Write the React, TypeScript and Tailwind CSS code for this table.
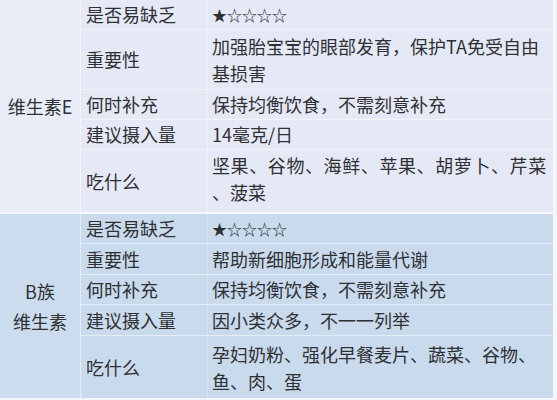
import React from "react";

const font = { fontFamily: '"Noto Sans CJK SC", "Noto Sans", sans-serif' };

type Row = { label: string; h: string; content: React.ReactNode };

function Section({
  title,
  rows,
  bg,
  first,
  line,
}: {
  title: React.ReactNode;
  rows: Row[];
  bg: string;
  first: string;
  line: string;
}) {
  return (
    <div className={`flex ${bg}`}>
      <div className={`w-[81px] shrink-0 flex items-center justify-center text-center border-r ${line} ${first}`}>
        {title}
      </div>
      <div className="flex-1 flex flex-col">
        {rows.map((r, i) => (
          <div
            key={i}
            className={`flex ${r.h} ${i < rows.length - 1 ? "border-b " + line : ""}`}
          >
            <div className={`w-[127px] shrink-0 flex items-center pl-[5px] border-r border-dotted ${line}`}>
              {r.label}
            </div>
            <div className="flex-1 min-w-0 flex items-center pl-[4px] leading-[27px] whitespace-nowrap">
              {r.content}
            </div>
          </div>
        ))}
      </div>
    </div>
  );
}

export default function App() {
  const stars = <span className="text-[15px] tracking-[0px]">★☆☆☆☆</span>;
  return (
    <div
      className="w-[557px] h-[400px] overflow-hidden bg-[#f4f6fb] pr-[4px] text-[18px] text-[#2f3034]"
      style={font}
    >
      <div className="border-b-2 border-[#f4f7fc]">
        <Section
          bg="bg-[#e5e9f5]"
          first="bg-[#e8ecf6]"
          line="border-[#f3f5fb]"
          title={<span>维生素E</span>}
          rows={[
            { label: "是否易缺乏", h: "h-[30px]", content: stars },
            {
              label: "重要性",
              h: "h-[60px]",
              content: (
                <div>
                  <div>加强胎宝宝的眼部发育，保护TA免受自由</div>
                  <div>基损害</div>
                </div>
              ),
            },
            { label: "何时补充", h: "h-[30px]", content: "保持均衡饮食，不需刻意补充" },
            { label: "建议摄入量", h: "h-[30px]", content: "14毫克/日" },
            {
              label: "吃什么",
              h: "h-[62px]",
              content: (
                <div className="-mt-[4px]">
                  <div className="tracking-[0.6px]">坚果、谷物、海鲜、苹果、胡萝卜、芹菜</div>
                  <div>、菠菜</div>
                </div>
              ),
            },
          ]}
        />
      </div>
      <Section
        bg="bg-[#c8daec]"
        first="bg-[#cadcee]"
        line="border-[#e4edf7]"
        title={
          <div className="leading-[30px]">
            <div>B族</div>
            <div>维生素</div>
          </div>
        }
        rows={[
          { label: "是否易缺乏", h: "h-[30px]", content: stars },
          { label: "重要性", h: "h-[31px]", content: "帮助新细胞形成和能量代谢" },
          { label: "何时补充", h: "h-[30px]", content: "保持均衡饮食，不需刻意补充" },
          { label: "建议摄入量", h: "h-[31px]", content: "因小类众多，不一一列举" },
          {
            label: "吃什么",
            h: "h-[62px]",
            content: (
              <div className="mt-[2px]">
                <div>孕妇奶粉、强化早餐麦片、蔬菜、谷物、</div>
                <div>鱼、肉、蛋</div>
              </div>
            ),
          },
        ]}
      />
    </div>
  );
}
